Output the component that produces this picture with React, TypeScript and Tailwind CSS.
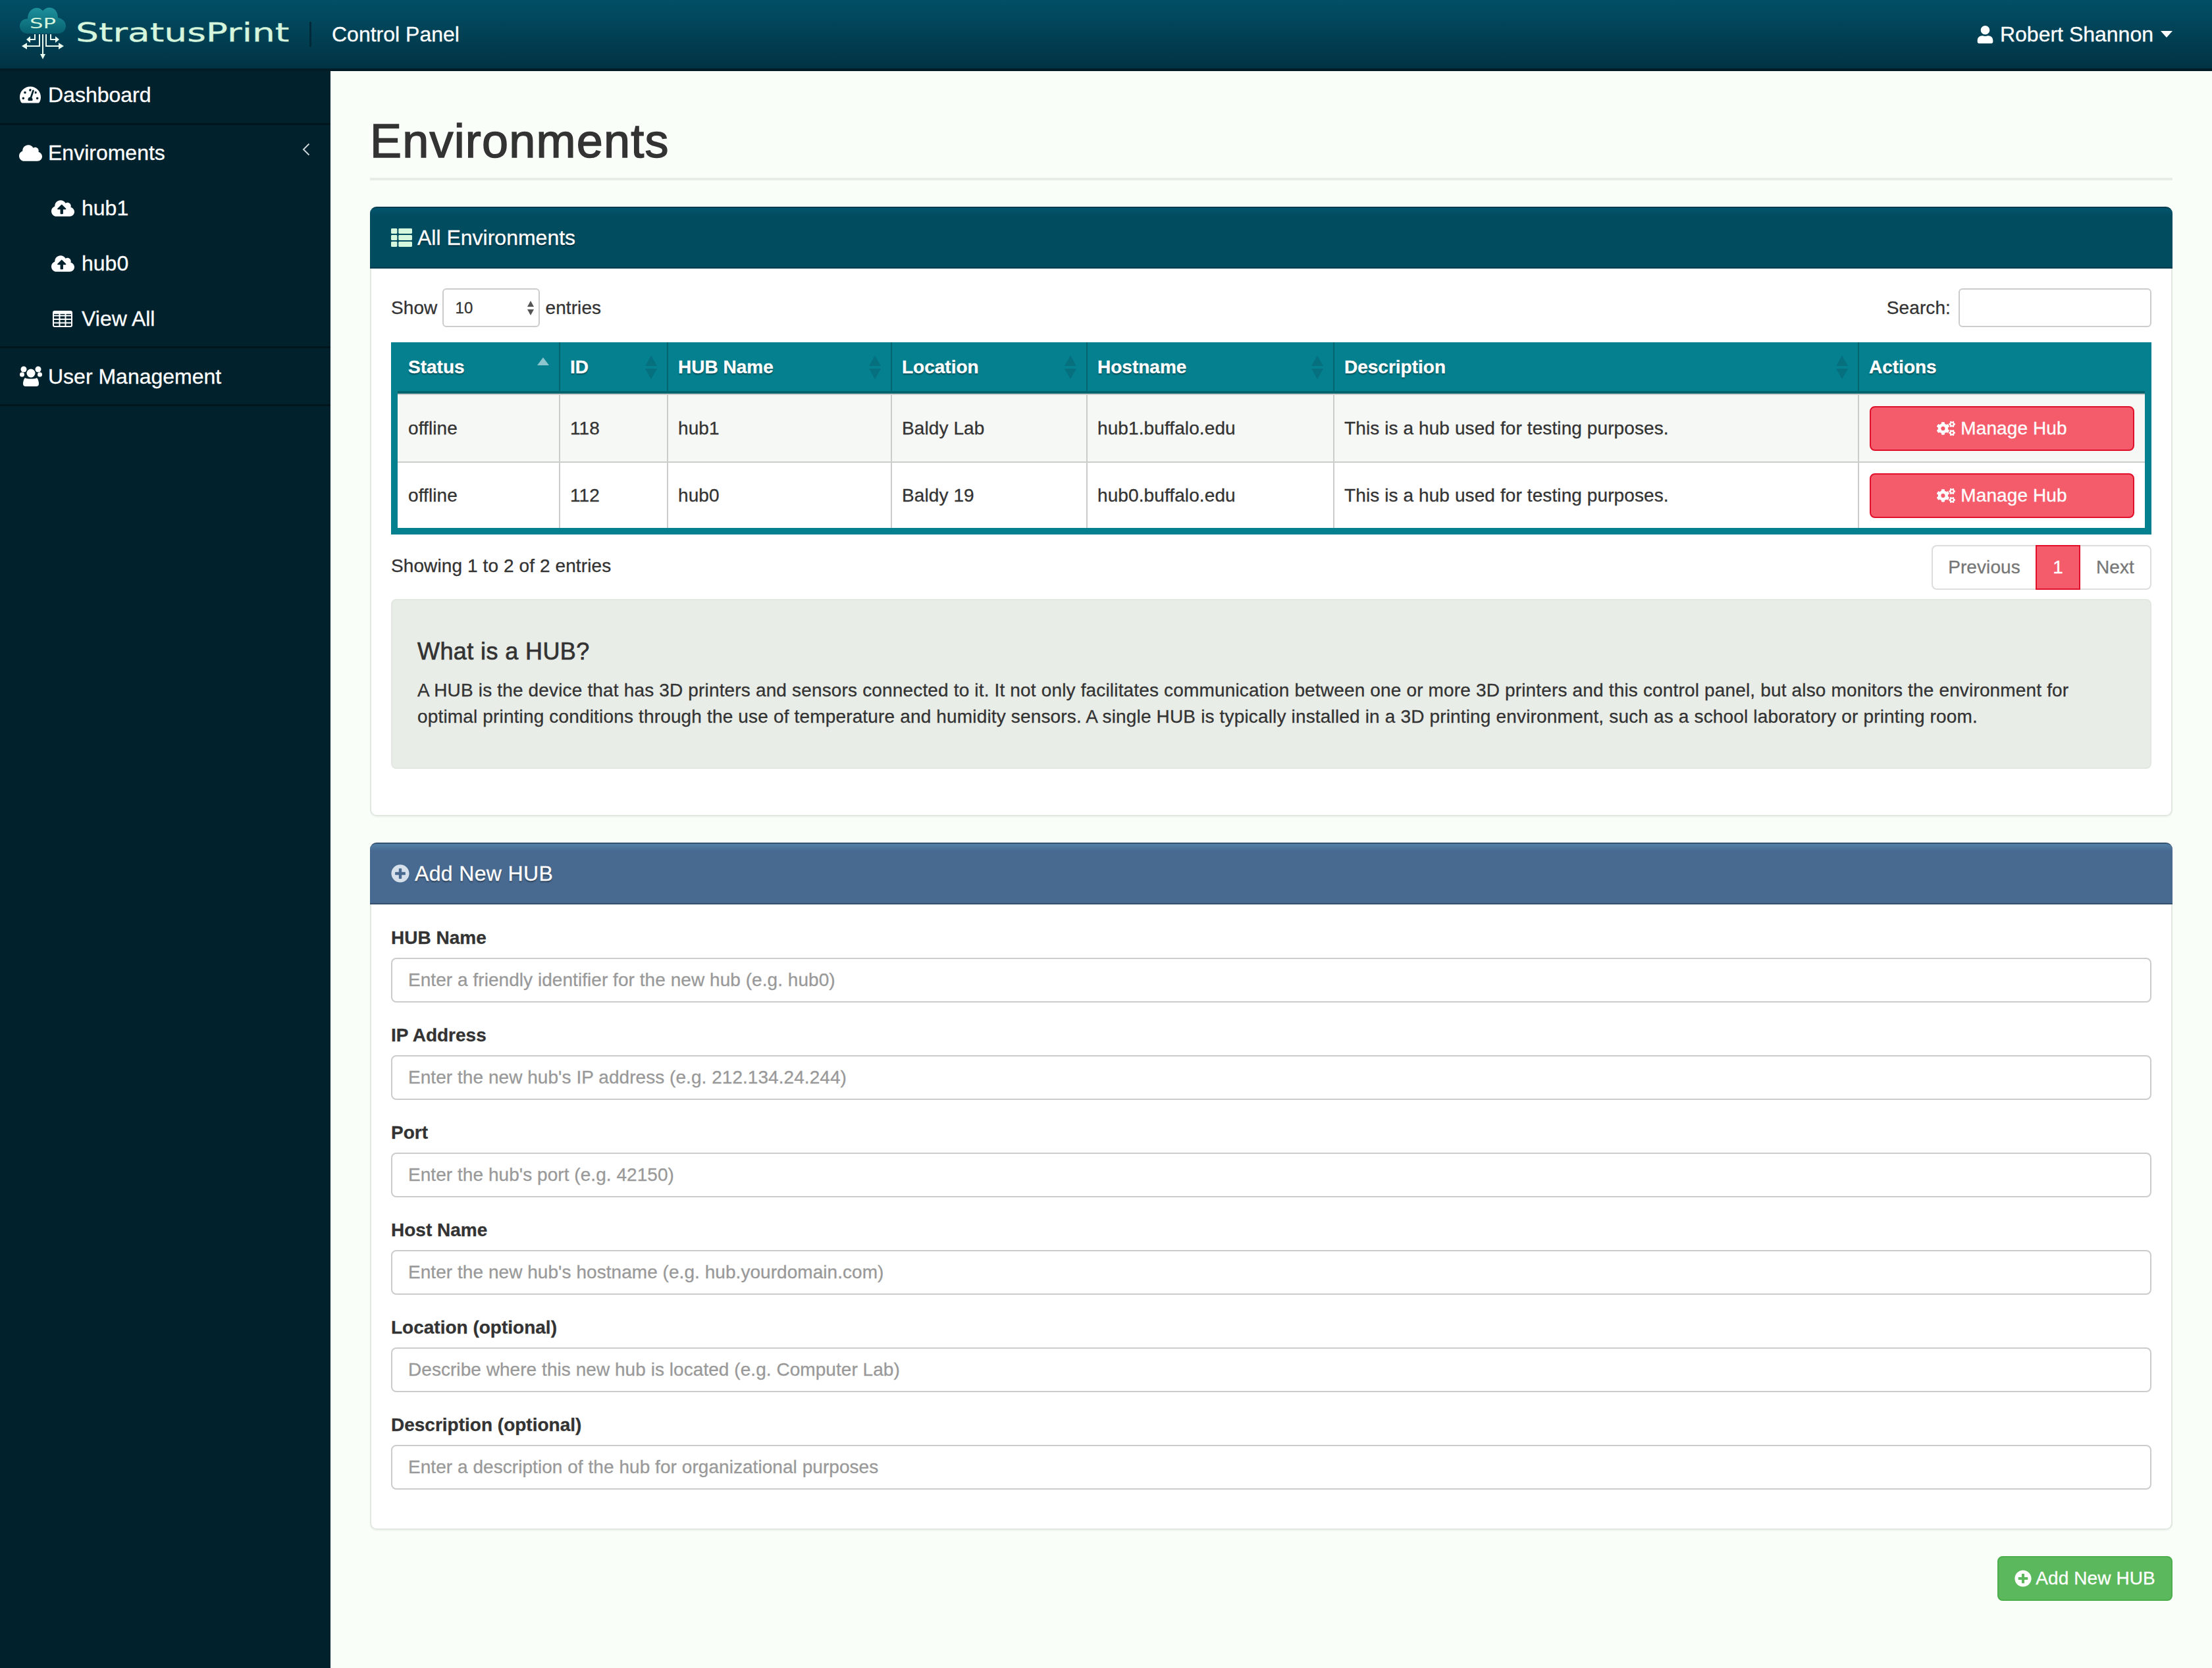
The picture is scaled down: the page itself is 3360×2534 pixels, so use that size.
import React from 'react';
import {
  FaTachometerAlt,
  FaCloud,
  FaCloudUploadAlt,
  FaThList,
  FaPlusCircle,
  FaCogs,
  FaUser,
} from 'react-icons/fa';

const COLUMNS = [
  { label: 'Status', width: 'w-[245px]', sort: 'asc' },
  { label: 'ID', width: 'w-[164px]', sort: 'both' },
  { label: 'HUB Name', width: 'w-[340px]', sort: 'both' },
  { label: 'Location', width: 'w-[297px]', sort: 'both' },
  { label: 'Hostname', width: 'w-[375px]', sort: 'both' },
  { label: 'Description', width: 'w-[797px]', sort: 'both' },
  { label: 'Actions', width: 'w-[436px]', sort: 'none' },
];

const HUBS = [
  { id: '118', name: 'hub1', location: 'Baldy Lab', host: 'hub1.buffalo.edu' },
  { id: '112', name: 'hub0', location: 'Baldy 19', host: 'hub0.buffalo.edu' },
];

const FIELDS = [
  { label: 'HUB Name', placeholder: 'Enter a friendly identifier for the new hub (e.g. hub0)' },
  { label: 'IP Address', placeholder: "Enter the new hub's IP address (e.g. 212.134.24.244)" },
  { label: 'Port', placeholder: "Enter the hub's port (e.g. 42150)" },
  { label: 'Host Name', placeholder: "Enter the new hub's hostname (e.g. hub.yourdomain.com)" },
  { label: 'Location (optional)', placeholder: 'Describe where this new hub is located (e.g. Computer Lab)' },
  { label: 'Description (optional)', placeholder: 'Enter a description of the hub for organizational purposes' },
];

function Logo() {
  return (
    <svg width="72" height="84" viewBox="0 0 72 84" className="shrink-0">
      <defs>
        <linearGradient id="cloud" x1="0" y1="0" x2="0" y2="1">
          <stop offset="0" stopColor="#1e929d" />
          <stop offset="1" stopColor="#07606f" />
        </linearGradient>
      </defs>
      <path
        d="M12 41C4 41 0 35 0 29.500C0 23 5 18.500 12 18.500C12 9 18 2 26 2C30 2 33 4 35 6.500C38 3 41 1.500 45 1.500C53 1.500 58 8 58 17C65 18 70 23 70 29.500C70 36 65 41 58 41Z"
        fill="url(#cloud)"
      />
      <text x="35" y="33" textAnchor="middle" fontSize="21" fill="#d5f5dc" fontFamily="'DejaVu Sans', sans-serif" textLength="40" lengthAdjust="spacingAndGlyphs">
        SP
      </text>
      <g stroke="#e8fbee" strokeWidth="2" fill="none">
        <path d="M35 42V74" />
        <path d="M30 42V60H10" />
        <path d="M40 42V60H60" />
        <path d="M23 42V50H15" />
        <path d="M47 42V50H55" />
      </g>
      <g fill="#e8fbee">
        <path d="M31 72H39L35 80Z" />
        <path d="M11 55V65L3 60Z" />
        <path d="M59 55V65L67 60Z" />
        <path d="M16 45V55L10 50Z" />
        <path d="M54 45V55L60 50Z" />
      </g>
    </svg>
  );
}

function SortIcon({ sort }: { sort: string }) {
  if (sort === 'none') return null;
  if (sort === 'asc') {
    return (
      <svg width="20" height="40" viewBox="0 0 20 40" className="shrink-0 -translate-y-[7px]">
        <path d="M10 12L19 24H1Z" fill="#8cc5cd" />
      </svg>
    );
  }
  return (
    <svg width="20" height="40" viewBox="0 0 20 40" className="shrink-0">
      <path d="M10 2L19 18H1Z" fill="#06707f" />
      <path d="M10 38L19 22H1Z" fill="#06707f" />
    </svg>
  );
}

function TableIcon() {
  return (
    <svg width="30" height="25" viewBox="0 0 30 25" fill="none" stroke="#ffffff" strokeWidth="2">
      <rect x="1" y="1" width="28" height="23" rx="2" />
      <path d="M1 7.500H29M1 13H29M1 18.500H29M10.500 5V24M19.500 5V24" />
      <path d="M1 3.500H29" strokeWidth="3" />
    </svg>
  );
}

function UsersIcon() {
  return (
    <svg width="34" height="31" viewBox="0 0 34 31" fill="#ffffff">
      <circle cx="6" cy="5" r="4.500" />
      <circle cx="28" cy="5" r="4.500" />
      <circle cx="3.500" cy="13" r="3.500" />
      <circle cx="30.500" cy="13" r="3.500" />
      <circle cx="17" cy="11" r="6.500" />
      <path d="M8 18C11 20 23 20 26 18C28 20 29 24 29 27C29 30 27 31 25 31H9C7 31 5 30 5 27C5 24 6 20 8 18Z" />
    </svg>
  );
}

function SideItem({ icon, label, sub, divider, arrow, rowClass }: {
  icon: React.ReactNode;
  label: string;
  sub?: boolean;
  divider?: boolean;
  arrow?: boolean;
  rowClass: string;
}) {
  return (
    <a className={`flex items-center text-white text-[32px] ${rowClass} ${sub ? 'pl-[78px]' : 'pl-[30px]'} ${divider ? 'border-b-[3px] border-[#00161d]' : ''}`}>
      <span className={`flex shrink-0 ${sub ? 'w-[46px]' : 'w-[43px]'}`}>{icon}</span>
      <span>{label}</span>
      {arrow && (
        <svg width="12" height="20" viewBox="0 0 12 20" fill="none" stroke="#c9d3d6" strokeWidth="2" className="ml-auto mr-[31px] mb-[10px]">
          <path d="M10.500 1.500L2 10L10.500 18.500" />
        </svg>
      )}
    </a>
  );
}

function Panel({ title, icon, headerClass, children }: {
  title: string;
  icon: React.ReactNode;
  headerClass: string;
  children: React.ReactNode;
}) {
  return (
    <section className="bg-white rounded-[10px] border-2 border-t-0 border-[#e0e8e0] mb-[40px] shadow-[0_2px_2px_rgba(0,0,0,0.04)]">
      <div className={`h-[94px] -mx-[2px] flex items-center gap-[8px] pl-[32px] rounded-t-[10px] text-white text-[32px] [text-shadow:0_2px_2px_rgba(0,0,0,0.45)] ${headerClass}`}>
        {icon}
        <span>{title}</span>
      </div>
      {children}
    </section>
  );
}

export default function App() {
  return (
    <div className="min-h-[2534px] flex flex-col bg-[#f9fef9] text-[#333333] text-[28px] tracking-[0.1px] [-webkit-text-stroke-width:0.3px] font-['Liberation_Sans',Arial,sans-serif]">
      <header className="h-[108px] shrink-0 flex items-center border-b-4 border-[#021b24] bg-gradient-to-b from-[#024f66] to-[#013344] pl-[30px] pr-[60px] tracking-normal">
        <Logo />
        <span className="ml-[13px] w-[324px] whitespace-nowrap text-[39px] leading-none tracking-normal text-[#d5f5dc] font-['DejaVu_Sans',sans-serif] origin-left scale-x-[1.41] -translate-y-[3px]">
          StratusPrint
        </span>
        <span className="ml-[31px] w-[3px] h-[38px] bg-[#012a38]" />
        <span className="ml-[31px] text-[32px] text-white">Control Panel</span>
        <div className="ml-auto flex items-center text-white text-[32px]">
          <FaUser className="text-[27px] mr-[9px]" />
          <span>Robert Shannon</span>
          <svg width="18" height="10" viewBox="0 0 18 10" className="ml-[11px]">
            <path d="M0 0H18L9 10Z" fill="#ffffff" />
          </svg>
        </div>
      </header>

      <div className="flex flex-1">
        <aside className="w-[502px] shrink-0 bg-[#01212c] tracking-normal">
          <SideItem rowClass="h-[82px] pb-[7px]" divider icon={<FaTachometerAlt className="text-[32px]" />} label="Dashboard" />
          <SideItem rowClass="h-[84px]" arrow icon={<FaCloud className="text-[35px] -ml-[1px]" />} label="Enviroments" />
          <SideItem rowClass="h-[84px]" sub icon={<FaCloudUploadAlt className="text-[35px]" />} label="hub1" />
          <SideItem rowClass="h-[84px]" sub icon={<FaCloudUploadAlt className="text-[35px]" />} label="hub0" />
          <SideItem rowClass="h-[87px]" sub divider icon={<span className="pl-[2px]"><TableIcon /></span>} label="View All" />
          <SideItem rowClass="h-[88px]" divider icon={<UsersIcon />} label="User Management" />
        </aside>

        <main className="flex-1 min-w-0 px-[60px] pt-[66px]">
          <h1 className="text-[72px] leading-[80px] tracking-[1.2px] [-webkit-text-stroke-width:1.5px] pb-[16px] border-b-4 border-[#e9ede8] mb-[40px]">
            Environments
          </h1>

          <Panel
            title="All Environments"
            icon={<FaThList className="text-[32px] text-[#d5f7dd]" />}
            headerClass="bg-gradient-to-b from-[#03566f] from-0% to-[#024c60] to-12% border-t-2 border-b-2 border-t-[#023c4e] border-b-[#023c4e] tracking-normal"
          >
            <div className="px-[30px] pt-[30px] pb-[70px]">
              <div className="flex items-center justify-between h-[59px] mb-[23px]">
                <label className="flex items-center">
                  Show
                  <span className="relative mx-[8px]">
                    <select className="appearance-none w-[148px] h-[59px] pl-[17px] text-[24px] bg-white border-2 border-[#cccccc] rounded-[6px]">
                      <option>10</option>
                    </select>
                    <svg width="12" height="24" viewBox="0 0 12 24" className="absolute right-[8px] top-[18px]">
                      <path d="M6 1L11 10H1Z" fill="#555555" />
                      <path d="M6 23L11 14H1Z" fill="#555555" />
                    </svg>
                  </span>
                  entries
                </label>
                <label className="flex items-center gap-[12px]">
                  Search:
                  <input className="w-[293px] h-[59px] bg-white border-2 border-[#cccccc] rounded-[6px]" />
                </label>
              </div>

              <div className="border-x-[10px] border-b-[10px] border-[#04808f]">
                <table className="w-full table-fixed border-separate border-spacing-0">
                  <thead>
                    <tr>
                      {COLUMNS.map((col, i) => (
                        <th
                          key={col.label}
                          className={`${col.width} h-[78px] bg-[#04808f] border-b-4 border-[#05656f] text-left text-white font-bold text-[28px] tracking-normal pt-[2px] pr-[14px] [text-shadow:0_2px_2px_rgba(0,0,0,0.45)] ${i ? 'border-l-2 pl-[15px]' : 'pl-[16px]'}`}
                        >
                          <div className="flex items-center justify-between">
                            <span>{col.label}</span>
                            <SortIcon sort={col.sort} />
                          </div>
                        </th>
                      ))}
                    </tr>
                  </thead>
                  <tbody>
                    {HUBS.map((hub, r) => {
                      const cell = `border-t-2 border-[#cccccc] ${r ? 'h-[101px] bg-white' : 'h-[103px] bg-[#f6f8f5]'}`;
                      const inner = `${cell} border-l-2 pl-[15px] pr-[16px]`;
                      return (
                        <tr key={hub.id}>
                          <td className={`${cell} px-[16px]`}>offline</td>
                          <td className={inner}>{hub.id}</td>
                          <td className={inner}>{hub.name}</td>
                          <td className={inner}>{hub.location}</td>
                          <td className={inner}>{hub.host}</td>
                          <td className={inner}>This is a hub used for testing purposes.</td>
                          <td className={`${cell} border-l-2 pl-[16px] pr-[15px]`}>
                            <button className="w-[402px] h-[68px] flex items-center justify-center gap-[8px] rounded-[8px] bg-[#f55c6b] border-2 border-[#e0102a] text-white">
                              <FaCogs className="text-[28px]" />
                              Manage Hub
                            </button>
                          </td>
                        </tr>
                      );
                    })}
                  </tbody>
                </table>
              </div>

              <div className="flex items-start justify-between mt-[16px] mb-[14px]">
                <span className="mt-[12px] leading-[40px]">Showing 1 to 2 of 2 entries</span>
                <div className="flex h-[68px] text-[#777777]">
                  <a className="w-[158px] flex items-center justify-center bg-white border-2 border-r-0 border-[#dddddd] rounded-l-[8px]">Previous</a>
                  <a className="w-[68px] flex items-center justify-center bg-[#f55c6b] border-2 border-[#e0102a] text-white">1</a>
                  <a className="w-[108px] flex items-center justify-center bg-white border-2 border-l-0 border-[#dddddd] rounded-r-[8px]">Next</a>
                </div>
              </div>

              <div className="h-[258px] bg-[#e9ede8] rounded-[8px] border-2 border-[#e3e7e2] px-[38px] pt-[58px]">
                <h4 className="text-[36px] leading-[40px] tracking-[0.4px] [-webkit-text-stroke-width:0.7px] mb-[19px]">What is a HUB?</h4>
                <p className="leading-[40px] tracking-[0.16px]">
                  A HUB is the device that has 3D printers and sensors connected to it. It not only facilitates communication between one or more 3D printers and this control panel, but also monitors the environment for optimal printing conditions through the use of temperature and humidity sensors. A single HUB is typically installed in a 3D printing environment, such as a school laboratory or printing room.
                </p>
              </div>
            </div>
          </Panel>

          <Panel
            title="Add New HUB"
            icon={<FaPlusCircle className="text-[28px] text-[#d6e0ea]" />}
            headerClass="bg-gradient-to-b from-[#5480a8] from-0% to-[#486a90] to-12% border-t-2 border-b-2 border-t-[#34506f] border-b-[#34506f] tracking-[0.35px]"
          >
            <form className="px-[30px] pt-[31px] pb-[29px]">
              {FIELDS.map(field => (
                <div key={field.label} className="mb-[30px]">
                  <label className="block font-bold tracking-normal leading-[40px] mb-[10px]">{field.label}</label>
                  <input
                    placeholder={field.placeholder}
                    className="block w-full h-[68px] px-[24px] tracking-[0.05px] bg-white border-2 border-[#cccccc] rounded-[8px] placeholder:text-[#999999]"
                  />
                </div>
              ))}
            </form>
          </Panel>

          <div className="flex justify-end">
            <button className="w-[266px] h-[68px] flex items-center justify-center gap-[6px] rounded-[8px] bg-[#5cb85c] border-2 border-[#4cae4c] text-white">
              <FaPlusCircle className="text-[26px]" />
              Add New HUB
            </button>
          </div>
        </main>
      </div>
    </div>
  );
}
